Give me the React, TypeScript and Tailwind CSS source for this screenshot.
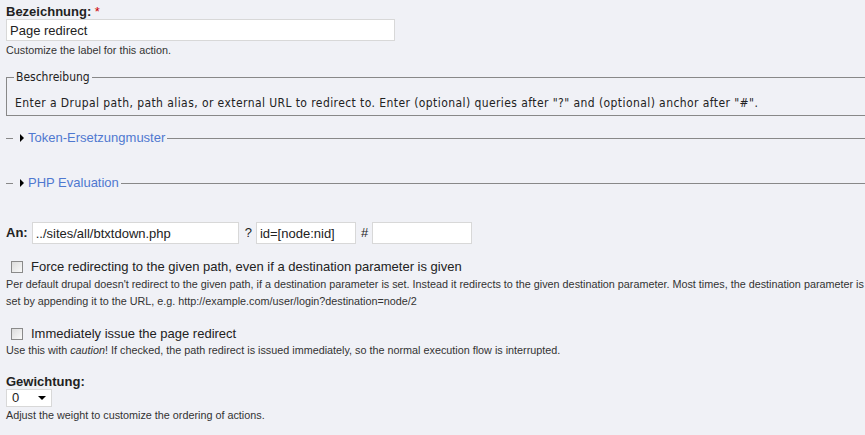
const font = "font-['Liberation_Sans',Arial,sans-serif]";
const tahoma = "font-['DejaVu_Sans_Condensed','Liberation_Sans',sans-serif]";

function Desc({ children }: { children: React.ReactNode }) {
  return <div className="text-[10.8px] leading-[17px] text-[#333]">{children}</div>;
}

function Collapsed({ title }: { title: string }) {
  return (
    <fieldset className="border-0 border-t border-[#888] pl-[7px] w-[900px]">
      <legend className="pl-[7px] pr-[2px] flex items-center text-[13px] leading-[14px]">
        <span className="w-0 h-0 border-y-[4px] border-y-transparent border-l-[4px] border-l-black mr-[4px]" />
        <span className="text-[#4f78d0]">{title}</span>
      </legend>
    </fieldset>
  );
}

function Checkbox({ label }: { label: string }) {
  return (
    <label className="flex items-center ml-[5px] text-[13px] leading-[16px]">
      <span className="w-[12px] h-[12px] border border-[#8a8a8a] bg-gradient-to-br from-[#dcdcdc] to-[#fafafa] mr-[8px]" />
      {label}
    </label>
  );
}

const inputCls = "h-[22px] bg-white border border-[#d8d8d8] px-[3px] text-[13px] text-[#222] outline-none";

export default function App() {
  return (
    <div className={`${font} bg-[#f0f1f6] text-[#222] w-[865px] h-[435px] overflow-hidden pl-[6px] pt-[4px]`}>
      {/* Bezeichnung */}
      <div className="text-[13px] font-bold leading-[15px]">
        Bezeichnung: <span className="text-[#c00] font-normal">*</span>
      </div>
      <input readOnly value="Page redirect" className={`block w-[389px] ${inputCls}`} />
      <div className="mt-[1px]">
        <Desc>Customize the label for this action.</Desc>
      </div>

      {/* Beschreibung */}
      <fieldset className="border border-r-0 border-[#888] pl-[7px] pb-[4px] mt-[11px] w-[900px]">
        <legend className={`${tahoma} px-[2px] text-[12px] leading-[14px]`}>Beschreibung</legend>
        <div className={`${tahoma} text-[12px] leading-[16px] tracking-[0.42px] mt-[11px] pl-[1px]`}>
          Enter a Drupal path, path alias, or external URL to redirect to. Enter (optional) queries after "?" and
          (optional) anchor after "#".
        </div>
      </fieldset>

      <div className="mt-[15px]">
        <Collapsed title="Token-Ersetzungmuster" />
      </div>
      <div className="mt-[31px]">
        <Collapsed title="PHP Evaluation" />
      </div>

      {/* An */}
      <div className="flex items-center mt-[32px] text-[13px]">
        <span className="font-bold mr-[4px]">An:</span>
        <input readOnly value="../sites/all/btxtdown.php" className={`w-[207px] ${inputCls}`} />
        <span className="ml-[6px] mr-[4px]">?</span>
        <input readOnly value="id=[node:nid]" className={`w-[100px] ${inputCls}`} />
        <span className="ml-[5px] mr-[4px]">#</span>
        <input readOnly value="" className={`w-[100px] ${inputCls}`} />
      </div>

      {/* Force redirect */}
      <div className="mt-[15px]">
        <Checkbox label="Force redirecting to the given path, even if a destination parameter is given" />
      </div>
      <div className="mt-[1px] w-[862px]">
        <Desc>
          Per default drupal doesn't redirect to the given path, if a destination parameter is set. Instead it redirects to
          the given destination parameter. Most times, the destination parameter is set by appending it to the URL, e.g.
          http://example.com/user/login?destination=node/2
        </Desc>
      </div>

      {/* Immediately */}
      <div className="mt-[16px]">
        <Checkbox label="Immediately issue the page redirect" />
      </div>
      <Desc>
        Use this with <em>caution</em>! If checked, the path redirect is issued immediately, so the normal execution flow
        is interrupted.
      </Desc>

      {/* Gewichtung */}
      <div className="text-[13px] font-bold leading-[15px] mt-[15px]">Gewichtung:</div>
      <div className="flex items-center justify-between w-[46px] h-[18px] bg-white border border-[#d8d8d8] pl-[5px] pr-[5px] text-[13px]">
        <span>0</span>
        <span className="w-0 h-0 border-x-[4px] border-x-transparent border-t-[4px] border-t-black" />
      </div>
      <Desc>Adjust the weight to customize the ordering of actions.</Desc>
    </div>
  );
}
